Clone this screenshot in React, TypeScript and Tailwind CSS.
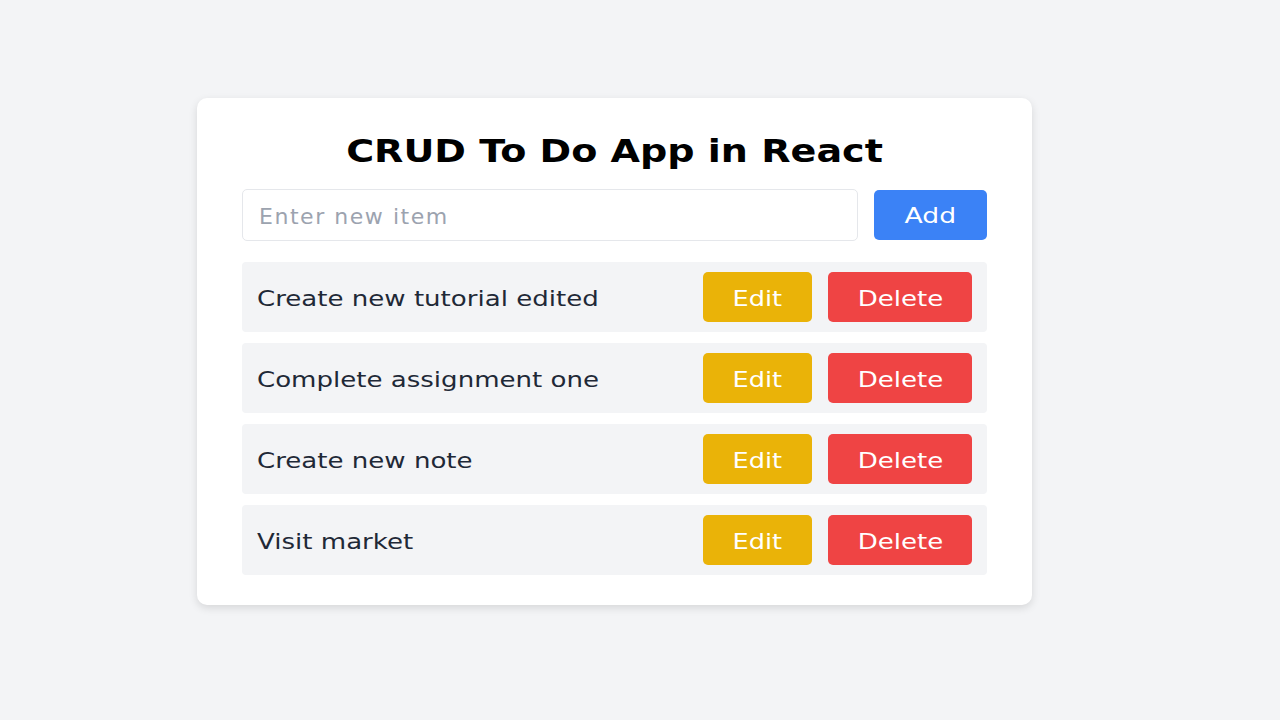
const items = [
  "Create new tutorial edited",
  "Complete assignment one",
  "Create new note",
  "Visit market",
];

export default function App() {
  return (
    <div
      className="min-h-screen w-full bg-[#f3f4f6] pt-[98px]"
      style={{ fontFamily: '"DejaVu Sans", "Open Sans", sans-serif' }}
    >
      <div className="ml-[197px] w-[835px] rounded-[10px] bg-white px-[45px] pt-[32px] pb-[30px] shadow-[0_3px_8px_rgba(0,0,0,0.12)]">
        <h1 className="text-center text-[32px] leading-[42px] font-bold text-black">
          <span className="inline-block origin-center scale-x-[1.19]">
            CRUD To Do App in React
          </span>
        </h1>

        {/* Input row */}
        <div className="mt-[17px] flex items-center gap-4">
          <input
            type="text"
            placeholder="Enter new item"
            className="h-[52px] flex-1 rounded-[5px] border border-[#e5e7eb] bg-white px-4 pt-[2px] text-[22px] tracking-[0.07em] text-[#1f2937] outline-none placeholder:text-[#9ca3af]"
          />
          <button className="h-[50px] w-[113px] rounded-[5px] bg-[#3b82f6] text-[21px] font-medium text-white">
            <span className="inline-block origin-center translate-y-[2px] scale-x-[1.27]">Add</span>
          </button>
        </div>

        {/* List */}
        <ul className="mt-[21px] flex flex-col gap-[11px]">
          {items.map((item) => (
            <li
              key={item}
              className="flex h-[70px] items-center justify-between rounded-[4px] bg-[#f3f4f6] px-[15px]"
            >
              <span className="inline-block origin-left translate-y-[3px] scale-x-[1.24] text-[21px] text-[#1f2937]">
                {item}
              </span>
              <div className="flex items-center gap-4">
                <button className="h-[50px] w-[109px] rounded-[5px] bg-[#eab308] text-[21px] text-white">
                  <span className="inline-block origin-center translate-y-[3px] scale-x-[1.22]">Edit</span>
                </button>
                <button className="h-[50px] w-[144px] rounded-[5px] bg-[#ef4444] text-[21px] text-white">
                  <span className="inline-block origin-center translate-y-[3px] scale-x-[1.24]">Delete</span>
                </button>
              </div>
            </li>
          ))}
        </ul>
      </div>
    </div>
  );
}
